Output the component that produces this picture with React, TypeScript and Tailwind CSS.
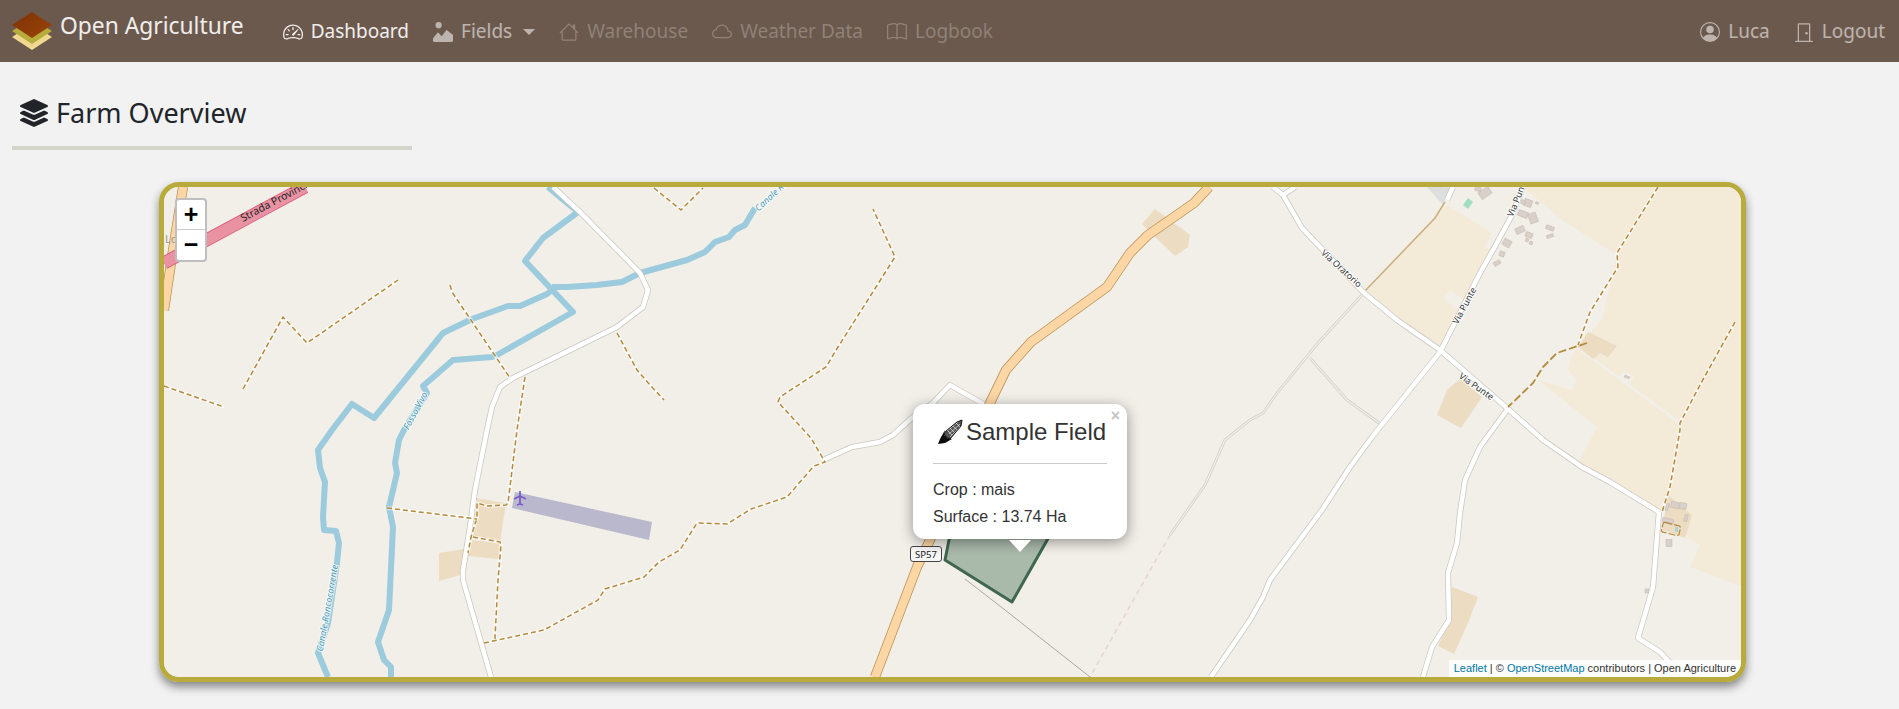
import { BsSpeedometer2, BsImageAlt, BsHouse, BsCloud, BsBook, BsPersonCircle, BsDoorClosed } from "react-icons/bs";
import { FaLayerGroup } from "react-icons/fa";

const rivers = [
  "548,187 578,212 543,238 525,261 573,312 497,355 492,357 453,360 423,386 427,393 404,430 399,440 395,463 397,473 389,507 393,527 389,610 378,642 384,660 391,667 391,677",
  "552,287 567,287 597,285 622,282 640,273 687,260 705,252 715,242 729,237 735,230 745,225 755,208",
  "552,290 547,294 520,306 508,306 472,319 443,333 374,418 352,404 332,430 318,450 320,468 325,482 323,517 324,530 336,531 339,543 337,563 328,623 318,653 328,677",
];

const whiteRoads = [
  "553,187 580,212 640,273 648,290 643,307 617,327 513,378 500,387 492,407 487,430 475,490 470,527 463,570 463,580 491,677",
  "1273,187 1283,195 1302,228 1363,292 1397,320 1440,350 1507,408 1543,440 1582,467 1610,482 1659,512",
  "1523,187 1512,215 1493,250 1480,273 1440,352 1372,437 1350,467 1322,510 1270,580 1263,597 1250,620 1211,677",
  "1507,410 1485,440 1480,447 1465,480 1460,513 1457,543 1448,573 1449,620 1432,647 1423,677",
  "1659,512 1653,587 1638,638 1660,652 1680,673",
  "1283,195 1295,187",
  "1453,187 1447,200",
  "823,460 852,447 880,442 893,435 913,417 933,403 950,385 985,405",
];

const tracks = [
  "1362,295 1318,343 1277,393 1263,413 1250,420 1225,440 1205,485 1170,535",
  "1310,358 1347,400 1379,423",
];

const paths = [
  "164,386 224,407",
  "243,389 283,317 307,343 398,280",
  "450,285 452,292 510,378",
  "525,377 517,430 508,503 506,505 487,506 477,503 477,518 471,537 468,553",
  "387,508 477,519",
  "473,537 500,542 501,545 498,580 495,638 496,640",
  "484,643 544,630 598,600 605,589 644,577 659,562 680,550 697,523 727,524 751,509 787,497 814,466 825,462 811,438 778,402 780,397 826,367 838,347 895,257 873,209",
  "617,333 637,370 650,385 664,400",
  "654,188 681,210 703,188",
  "1658,187 1617,253 1618,267 1590,312 1578,345",
  "1735,322 1700,385 1680,423 1680,430 1670,487 1662,512",
];

const farmyards = [
  "475,498 506,503 500,542 470,537",
  "471,540 501,543 499,559 468,556",
  "439,553 464,549 460,575 439,581",
  "1155,209 1190,235 1188,247 1175,256 1142,224",
  "1588,332 1617,346 1608,357 1600,353 1593,359 1578,347",
  "1460,379 1482,397 1461,428 1437,415 1447,390",
  "1452,587 1478,597 1468,623 1454,654 1438,646 1450,620",
  "1668,495 1692,515 1685,538 1662,530",
];

const buildings: [number, number, number, number, number][] = [
  [1485, 193, 12, 8, -35], [1478, 189, 6, 4, 20], [1528, 203, 8, 7, 20], [1523, 202, 4, 4, 20],
  [1523, 214, 10, 6, 20], [1533, 218, 8, 10, -20], [1520, 230, 9, 6, -25], [1529, 235, 7, 5, 20],
  [1507, 243, 8, 7, 30], [1502, 254, 5, 5, 20], [1497, 263, 7, 4, -30], [1550, 228, 8, 4, 20],
  [1550, 236, 7, 3, -20], [1527, 240, 3, 3, 20], [1531, 243, 3, 3, 20], [1537, 203, 3, 2, 20],
  [1627, 377, 5, 2, 20], [1675, 505, 8, 6, 10], [1683, 506, 7, 6, 10], [1667, 507, 3, 7, 15],
  [1686, 518, 3, 7, 15], [1668, 521, 11, 5, 15], [1669, 543, 6, 7, 0], [1647, 591, 4, 4, 0],
];

const mapLabels: [string, number, number, number, string, string][] = [
  ["Fosso Vivo", 416, 411, -62, "#4d9ab5", "italic"],
  ["Canale Roncocorrente", 328, 608, -80, "#4d9ab5", "italic"],
  ["Canale Roncocorrente", 789, 180, -43, "#4d9ab5", "italic"],
  ["Via Oratorio", 1341, 269, 42, "#333333", "not-italic"],
  ["Via Punte", 1465, 306, -62, "#333333", "not-italic"],
  ["Via Punte", 1476, 387, 35, "#333333", "not-italic"],
  ["Via Punte", 1518, 198, -68, "#333333", "not-italic"],
];

function MapDrawing() {
  return (
    <svg width="1577" height="490" viewBox="164 187 1577 490" className="block">
      <rect x="164" y="187" width="1577" height="490" fill="#f2efe9" />

      {/* farmland */}
      <polygon points="1447,205 1492,233 1485,247 1493,250 1442,347 1397,320 1367,292" fill="#f3ead8" />
      <polygon points="1443,298 1450,290 1467,302 1460,312" fill="#f2efe9" />
      <polygon
        points="1523,187 1741,187 1741,586 1690,567 1700,545 1687,538 1668,495 1658,512 1578,463 1597,427 1538,380 1572,390 1577,380 1568,370 1570,360 1578,345 1602,320 1617,255 1562,220"
        fill="#f3ead8"
      />
      <polygon points="1427,187 1450,187 1443,205" fill="#dedede" />
      <polygon points="1463,205 1468,198 1473,202 1468,209" fill="#a1dfc5" />
      <polyline points="1578,348 1680,423" fill="none" stroke="#f2efe9" strokeWidth="3" />
      <polygon points="1618,378 1624,371 1634,376 1630,384" fill="#f2efe9" />

      {farmyards.map((p) => (
        <polygon key={p} points={p} fill="#ebdcc2" />
      ))}

      {/* runway */}
      <polygon points="515,492 652,522 649,540 512,508" fill="#bab8cc" />
      <path d="M520 491v14m-6-6 6-3 6 3m-9 6 3-1 3 1" fill="none" stroke="#7a5bc8" strokeWidth="1.8" />

      {buildings.map(([x, y, w, h, r]) => (
        <rect
          key={`${x}-${y}`}
          x={x - w / 2}
          y={y - h / 2}
          width={w}
          height={h}
          fill="#d9d0c9"
          stroke="#c4b6ab"
          strokeWidth="0.5"
          transform={`rotate(${r} ${x} ${y})`}
        />
      ))}
      <rect
        x="1662"
        y="524"
        width="18"
        height="10"
        rx="2"
        fill="none"
        stroke="#b38a3b"
        strokeWidth="1.2"
        strokeDasharray="7 2"
        transform="rotate(14 1671 529)"
      />
      <rect x="1675" y="527" width="3" height="5" fill="#aad3df" />

      {/* water */}
      {rivers.map((p) => (
        <polyline key={p} points={p} fill="none" stroke="#9bcbdc" strokeWidth="6" strokeLinejoin="round" />
      ))}

      {/* tracks */}
      {tracks.map((p) => (
        <g key={p}>
          <polyline points={p} fill="none" stroke="#d3d0ca" strokeWidth="2.8" />
          <polyline points={p} fill="none" stroke="#f2efe9" strokeWidth="1.2" />
        </g>
      ))}
      <polyline points="1170,535 1090,677" fill="none" stroke="#e6d3cc" strokeWidth="1.5" strokeDasharray="5 4" />
      <polyline points="965,579 1005,610 1090,677" fill="none" stroke="#a8a8a4" strokeWidth="1" />
      <polyline points="1365,291 1435,218 1445,202" fill="none" stroke="#cdb07c" strokeWidth="1.6" />

      {/* minor roads */}
      {whiteRoads.map((p) => (
        <polyline key={p} points={p} fill="none" stroke="#c9c7c2" strokeWidth="6" strokeLinejoin="round" />
      ))}
      {whiteRoads.map((p) => (
        <polyline key={p} points={p} fill="none" stroke="#ffffff" strokeWidth="4.5" strokeLinejoin="round" />
      ))}

      {/* footpaths */}
      {paths.map((p) => (
        <g key={p}>
          <polyline points={p} fill="none" stroke="#ffffff" strokeOpacity="0.6" strokeWidth="3.5" />
          <polyline points={p} fill="none" stroke="#b38a3b" strokeWidth="1.5" strokeDasharray="5 3" />
        </g>
      ))}
      <polyline points="1587,343 1557,353 1543,367 1533,383 1508,407" fill="none" stroke="#b38a3b" strokeWidth="1.8" strokeDasharray="8 3" />

      {/* primary roads */}
      <polyline points="183,187 173,250 164,310" fill="none" stroke="#b98f4f" strokeWidth="10" />
      <polyline points="183,187 173,250 164,310" fill="none" stroke="#fcd6a4" strokeWidth="8.5" />
      <polyline points="305,187 164,263" fill="none" stroke="#d9567a" strokeWidth="13" />
      <polyline points="305,187 164,263" fill="none" stroke="#e892a2" strokeWidth="11.5" />
      <polyline
        points="1209,187 1194,203 1174,217 1148,235 1130,253 1107,287 1031,342 1006,370 990,403 930,540 917,567 875,677"
        fill="none"
        stroke="#b98f4f"
        strokeWidth="10"
        strokeLinejoin="round"
      />
      <polyline
        points="1209,187 1194,203 1174,217 1148,235 1130,253 1107,287 1031,342 1006,370 990,403 930,540 917,567 875,677"
        fill="none"
        stroke="#fcd6a4"
        strokeWidth="8.5"
        strokeLinejoin="round"
      />

      {/* field */}
      <polygon points="950,535 945,560 1012,602 1050,535" fill="#a9b9aa" stroke="#3f6750" strokeWidth="3" strokeLinejoin="round" />

      <g fontFamily="'Noto Sans', sans-serif" fontSize="9">
        {mapLabels.map(([text, x, y, r, color, style]) => (
          <text
            key={`${text}-${x}`}
            x={x}
            y={y}
            textAnchor="middle"
            dominantBaseline="middle"
            fill={color}
            stroke="#ffffff"
            strokeOpacity="0.75"
            strokeWidth="2"
            paintOrder="stroke"
            className={style}
            transform={`rotate(${r} ${x} ${y})`}
          >
            {text}
          </text>
        ))}
        <text x="243" y="222" fill="#222222" fontSize="10.5" transform="rotate(-28 243 222)">
          Strada Provinciale
        </text>
        <text x="165" y="243" fill="#999999" fontSize="11">
          Lo
        </text>
      </g>

      <rect x="910.5" y="546.5" width="31" height="15" rx="2.5" fill="#f7f7f7" stroke="#444444" strokeWidth="1" />
      <text x="926" y="557.5" textAnchor="middle" fontFamily="'Noto Sans', sans-serif" fontSize="9.5" fill="#222222">
        SP57
      </text>
    </svg>
  );
}

function Logo() {
  return (
    <svg width="41" height="38" viewBox="0 0 41 38" className="shrink-0">
      <defs>
        <linearGradient id="logoTop" x1="0" y1="0" x2="1" y2="1">
          <stop offset="0" stopColor="#7c3205" />
          <stop offset="1" stopColor="#9c4408" />
        </linearGradient>
      </defs>
      <polygon points="20,12 40,25 20,38 0,25" fill="#f1d890" />
      <polygon points="20,6 40,19 20,32 0,19" fill="#b7ad3a" />
      <polygon points="20,0 40,13 20,26 0,13" fill="url(#logoTop)" />
    </svg>
  );
}

function CornIcon() {
  return (
    <svg width="26" height="26" viewBox="0 0 26 26" className="shrink-0">
      <path d="M9 12 20 3l5-2-1 6-11 13-4-2-2-3z" fill="#555555" />
      <path d="M8 11 3 20l-2 5 7-1 7-4-5-1-2-3-1 1z" fill="#0d0d0d" />
      <path d="M10 12 21 3M12 15 23 5M13 18 24 7M13 9l4 4M16 7l4 4M19 4l4 4M10 11l5 5" stroke="#ffffff" strokeWidth="0.6" fill="none" />
      <path d="M9 12 20 3l5-2-1 6-11 13-4-2-2-3z" fill="none" stroke="#111111" strokeWidth="1" />
    </svg>
  );
}

function NavItem({ icon, label, tone }: { icon: React.ReactNode; label: string; tone: string }) {
  return (
    <a className={`flex items-center gap-2 ${tone}`}>
      {icon}
      <span>{label}</span>
    </a>
  );
}

export default function App() {
  const on = "text-white/90";
  const half = "text-white/55";
  const off = "text-white/25";

  return (
    <div className="min-h-[709px] bg-[#f2f2f2] font-['Noto_Sans',sans-serif]">
      <nav className="flex h-[62px] items-center bg-[#6c594d] pl-3 pr-[14px] text-[19px]">
        <div className="mr-[39px] flex items-center gap-[7px]">
          <Logo />
          <span className="-mt-[10px] text-[22.8px] text-white/90">Open Agriculture</span>
        </div>
        <div className="flex items-center gap-6 pt-[1px]">
          <NavItem icon={<BsSpeedometer2 size={20} />} label="Dashboard" tone={on} />
          <div className={`flex items-center gap-2 ${half}`}>
            <BsImageAlt size={20} />
            <span>Fields</span>
            <span className="ml-[3px] border-x-[6px] border-t-[6px] border-x-transparent border-t-white/55" />
          </div>
          <NavItem icon={<BsHouse size={20} />} label="Warehouse" tone={off} />
          <NavItem icon={<BsCloud size={20} />} label="Weather Data" tone={off} />
          <NavItem icon={<BsBook size={20} />} label="Logbook" tone={off} />
        </div>
        <div className="ml-auto flex items-center gap-6 pt-[1px]">
          <NavItem icon={<BsPersonCircle size={20} />} label="Luca" tone={half} />
          <NavItem icon={<BsDoorClosed size={20} />} label="Logout" tone={half} />
        </div>
      </nav>

      <div className="pl-3">
        <div className="h-[88px] w-[400px] border-b-4 border-[#d3d6c8] pl-2">
          <h1 className="flex items-center gap-2 pt-[32px] text-[27px] leading-[38px] text-[#212529]">
            <FaLayerGroup size={28} />
            Farm Overview
          </h1>
        </div>
      </div>

      <div className="ml-[159px] mt-8 h-[500px] w-[1587px] rounded-[20px] border-[5px] border-[#b9aa3c] shadow-[0_5px_10px_rgba(0,0,0,0.45)]">
        <div className="relative h-full w-full overflow-hidden rounded-[15px]">
          <MapDrawing />

          <div className="absolute left-[11px] top-[11px] w-[32px] rounded-[4px] border-2 border-black/25 bg-white font-['Liberation_Sans',sans-serif] text-[25px] font-bold leading-[28px] text-black">
            <div className="h-[30px] rounded-t-[2px] border-b border-[#cccccc] text-center">+</div>
            <div className="h-[30px] text-center">−</div>
          </div>

          <div className="absolute left-[749px] top-[217px] h-[135px] w-[214px] rounded-[12px] bg-white pl-5 pr-5 font-['Liberation_Sans',sans-serif] text-[#333333] shadow-[0_3px_14px_rgba(0,0,0,0.4)]">
            <span className="absolute right-[7px] top-0 text-[16px] font-bold text-[#c3c3c3]">×</span>
            <div className="flex h-[59px] items-center gap-[3px] whitespace-nowrap pb-[3px] pl-1 text-[24px]">
              <CornIcon />
              Sample Field
            </div>
            <div className="border-t border-[#cccccc]" />
            <div className="pt-3 text-[16px] leading-[27px]">
              <div>Crop : mais</div>
              <div>Surface : 13.74 Ha</div>
            </div>
          </div>
          <div className="absolute left-[845px] top-[353px] h-0 w-0 border-x-[11px] border-t-[12px] border-x-transparent border-t-white" />

          <div className="absolute bottom-0 right-0 rounded-br-[15px] bg-white/80 px-[5px] font-['Liberation_Sans',sans-serif] text-[11px] leading-[17px] text-[#333333]">
            <span className="text-[#0078a8]">Leaflet</span> | © <span className="text-[#0078a8]">OpenStreetMap</span> contributors | Open Agriculture
          </div>
        </div>
      </div>
    </div>
  );
}
